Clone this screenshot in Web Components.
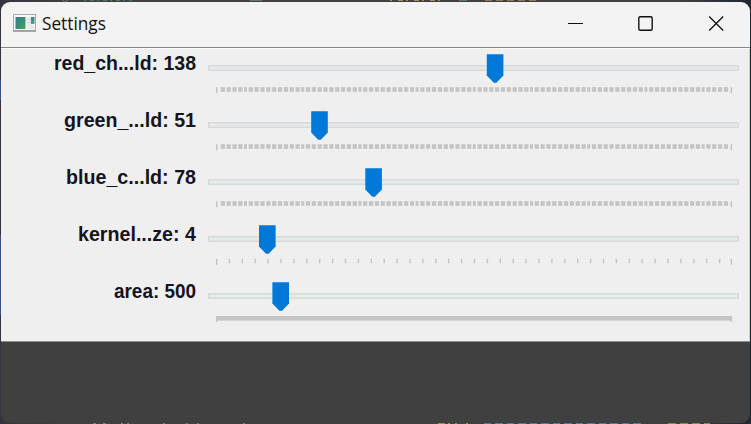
<!DOCTYPE html>
<html lang="en"><head><meta charset="utf-8"><title>Settings</title>
<style>html,body{margin:0;width:751px;height:424px;overflow:hidden;background:#2b2b30}</style></head>
<body><settings-window></settings-window>
<script>
class TitleBar extends HTMLElement{
 constructor(){super();this.attachShadow({mode:'open'}).innerHTML=`
 <style>:host{display:flex;align-items:center;height:45px;box-sizing:border-box;padding:0 26px 3px 12px;background:#f3f3f3;color:#111;font:18px/24px "Open Sans","Noto Sans",sans-serif}
 svg{display:block;flex:none}.name{flex:1;padding-left:5px}.name span{display:inline-block;transform-origin:0 50%;transform:scaleX(.957)}
 .controls{display:flex;gap:53px}</style>
 <svg width="24" height="18"><defs><linearGradient id="g" x2="1" y2="1"><stop stop-color="#347b93"/><stop offset=".5" stop-color="#388f78"/><stop offset="1" stop-color="#49a75c"/></linearGradient><linearGradient id="b" x2="0" y2="1"><stop stop-color="#347b9b"/><stop offset="1" stop-color="#50a777"/></linearGradient></defs>
 <rect x=".5" y=".5" width="22" height="16" fill="#f8f8f8" stroke="#a9a9ad"/><path d="M0 17.2H23" stroke="#85858b"/><rect x="2.5" y="3" width="10" height="12" fill="url(#g)"/><rect x="14" y="3" width="4" height="12" fill="#ececec"/><path d="M14 5.5h4M14 8.5h4" stroke="#d7d7d7"/><rect x="18" y="3" width="3.5" height="7" fill="url(#b)"/><rect x="17" y="11" width="4" height="4" fill="#e5e5e5"/></svg>
 <div class="name"><span><slot></slot></span></div>
 <div class="controls"><svg width="17" height="17"><path d="M1 8.5h15" stroke="#111" stroke-width="1.1"/></svg><svg width="17" height="17"><rect x="1.8" y="1.8" width="13.4" height="13.4" rx="1.5" fill="none" stroke="#111" stroke-width="1.4"/></svg><svg width="17" height="17"><path d="M2.2 1.5l14 14M16.2 1.5l-14 14" stroke="#111" stroke-width="1.3"/></svg></div>`}}
customElements.define('title-bar',TitleBar);

class TrackBar extends HTMLElement{
 connectedCallback(){
  const kind=this.getAttribute('ticks'),x=+this.getAttribute('thumb'),w=this.getAttribute('label-width');let t='';
  const top={solid:39,sparse:38.7,dense:38.2}[kind];
  const r=(a,y,b,h)=>`<rect x="${a.toFixed(2)}" y="${y}" width="${b.toFixed(2)}" height="${h}"/>`;
  if(kind==='solid')t=r(8,top,516,4.6);
  else if(kind==='sparse'){for(let i=1;i<40;i++)t+=r(7.8+i*12.9,top,1.4,4.5)}
  else for(let k=-1;k<9;k++){const s=36+57.2*k;if(k>=0)t+=r(s,top,3,4.6);for(let i=0;i<9;i++){const a=s+4.7+i*5.85;if(a>11&&a<519)t+=r(a,top,4.2,4.6)}}
  this.attachShadow({mode:'open'}).innerHTML=`
 <style>:host{display:grid;grid-template-columns:195px 531px;column-gap:12px;height:57px;color:#141420;font:bold 19.5px/24px "Liberation Sans",Arial,sans-serif}
 .label{display:flex;justify-content:flex-end;padding-top:2px;white-space:nowrap}svg.text{display:block;overflow:visible}svg{display:block}</style>
 <div class="label"><svg class="text" width="${w}" height="24"><text x="0" y="18.5" textLength="${w}" lengthAdjust="spacingAndGlyphs" fill="currentColor">${this.textContent}</text></svg></div>
 <svg width="531" height="57"><rect x=".75" y="16.75" width="529.5" height="4.5" fill="#e6eaea" stroke="#d7dada" stroke-width="1.5"/>
 <g fill="#c4c4c4">${t}${r(8,top,1.5,6)}${r(522.6,top,1.5,6)}</g>
 <path d="M${x} 5.3h16.6v21.2l-7 7.3h-2.6l-7-7.3z" fill="#0078d7"/></svg>`}}
customElements.define('track-bar',TrackBar);

class SettingsWindow extends HTMLElement{
 constructor(){super();this.attachShadow({mode:'open'}).innerHTML=`
 <style>:host{display:block;position:relative;width:751px;height:424px;background:linear-gradient(90deg,#34343d,#414142 10% 90%,#202630)}
 .frame{box-sizing:border-box;height:424px;padding:2px 1px 1px}
 .window{display:flex;flex-direction:column;height:421px;overflow:hidden;border-radius:9px;background:#404040}
 .controls{height:295px;box-sizing:border-box;padding-top:1px;background:#efefef;border-top:1px solid #868686;border-bottom:1px solid #8d8d8d;box-shadow:inset 0 1px #fafafa,inset -1px 0 #c9cccf}
 .behind{position:absolute;left:0;top:0;pointer-events:none}</style>
 <div class="frame"><div class="window"><title-bar>Settings</title-bar><div class="controls">
 <track-bar ticks="dense" thumb="278.8" label-width="142">red_ch...ld: 138</track-bar>
 <track-bar ticks="dense" thumb="103.2" label-width="132">green_...ld: 51</track-bar>
 <track-bar ticks="dense" thumb="157.3" label-width="130">blue_c...ld: 78</track-bar>
 <track-bar ticks="sparse" thumb="51" label-width="118">kernel...ze: 4</track-bar>
 <track-bar ticks="solid" thumb="64.4" label-width="82">area: 500</track-bar></div></div></div>
 <svg class="behind" width="751" height="424"><g fill="none">
 <path d="M62 0l3 2 3-2" stroke="#77777a"/><path d="M84 .5h48" stroke="#4d7a56" stroke-dasharray="2 4 4 3"/><path d="M390 .5h56" stroke="#a58d5b" stroke-dasharray="2 6 5 3"/><path d="M250 .5h12M459 .5h8" stroke="#5d7a70"/><path d="M485 .5h54" stroke="#937958" stroke-dasharray="7 4"/>
 <path d="M.5 80v20M.5 235v80" stroke="#35508a"/>
 <path d="M93 423.5h3M103 423.5h3M121 423.5h2M127 423.5h2M163 423.5h2M186 423.5h2M197 423.5h2M243 423.5h2" stroke="#77818a"/>
 <path d="M438 423.5h7M448 423.5h2M455 423.5h2M466 423.5h2" stroke="#9a8962"/><path d="M484 423.5h157" stroke="#63788e" stroke-dasharray="7 4 8 4"/><path d="M668 423.5h42" stroke="#7c8b68" stroke-dasharray="8 4"/></g></svg>`}}
customElements.define('settings-window',SettingsWindow);
</script></body></html>
